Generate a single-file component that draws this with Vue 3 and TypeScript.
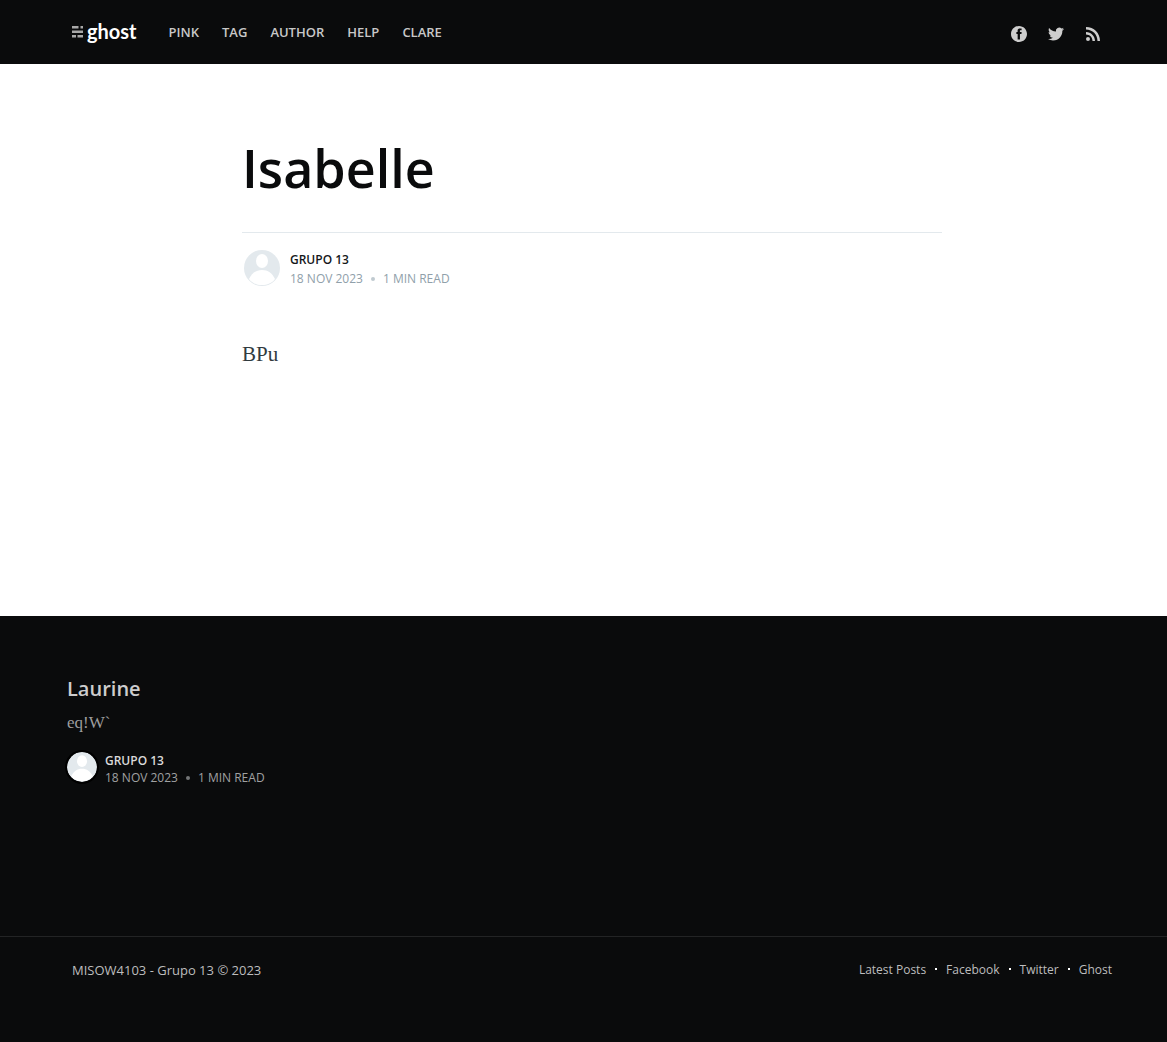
<script setup lang="ts">
interface Link {
  label: string
  href: string
}

const navLinks: Link[] = ['Pink', 'Tag', 'Author', 'Help', 'Clare'].map((label) => ({
  label,
  href: `#${label.toLowerCase()}`,
}))

const socialLinks = [
  {
    label: 'Facebook',
    href: '#facebook',
    viewBox: '0 0 32 32',
    path: 'M16 0c8.837 0 16 7.163 16 16s-7.163 16-16 16S0 24.837 0 16 7.163 0 16 0zm5.204 4.911h-3.546c-2.103 0-4.443.885-4.443 3.934.01 1.062 0 2.08 0 3.225h-2.433v3.872h2.509v11.147h4.61v-11.22h3.042l.275-3.81h-3.397s.007-1.695 0-2.187c0-1.205 1.253-1.136 1.329-1.136h2.054V4.911z',
  },
  {
    label: 'Twitter',
    href: '#twitter',
    viewBox: '0 0 24 24',
    path: 'M24 4.6c-.9.4-1.8.7-2.8.8 1-.6 1.8-1.6 2.2-2.7-1 .6-2 1-3.1 1.2A4.92 4.92 0 0 0 11.9 8.4C7.7 8.2 4.1 6.1 1.7 3.1 1.2 3.9 1 4.7 1 5.6c0 1.7.9 3.2 2.2 4.1-.8 0-1.6-.2-2.2-.6v.1c0 2.4 1.7 4.4 3.9 4.8-.7.2-1.5.2-2.2.1.6 2 2.4 3.4 4.6 3.4A9.9 9.9 0 0 1 0 19.5 13.9 13.9 0 0 0 7.5 21.7c9.1 0 14-7.5 14-14v-.6c1-.7 1.8-1.6 2.5-2.5z',
  },
  {
    label: 'RSS',
    href: '#rss',
    viewBox: '0 0 16 16',
    path: 'M5 13a2 2 0 1 1-4 0 2 2 0 0 1 4 0zM1 6v2.5c3.7 0 6.5 2.8 6.5 6.5H10C10 10 6 6 1 6zM1 1v2.5C7.5 3.5 12.5 8.5 12.5 15H15C15 7 9 1 1 1z',
  },
]

const footerLinks: Link[] = ['Latest Posts', 'Facebook', 'Twitter', 'Ghost'].map((label) => ({
  label,
  href: `#${label.toLowerCase().replace(' ', '-')}`,
}))
</script>

<template>
  <div class="site">
    <header class="bar">
      <nav class="inner bar-inner" aria-label="Main">
        <a class="logo" href="#home">
          <svg width="12" height="12" viewBox="0 0 12 12" aria-hidden="true">
            <path d="M0 0h6.5v2.4H0zM8.500 0H11v2.4H8.500zM0 4.500h11v2.400H0zM0 9h4v2.400H0zM5.500 9H11v2.400H5.500z" />
          </svg>
          <span>ghost</span>
        </a>
        <ul class="nav">
          <li v-for="link in navLinks" :key="link.label">
            <a :href="link.href">{{ link.label }}</a>
          </li>
        </ul>
        <div class="social">
          <a v-for="item in socialLinks" :key="item.label" :href="item.href" :aria-label="item.label">
            <svg width="16" height="16" :viewBox="item.viewBox" aria-hidden="true">
              <path :d="item.path" />
            </svg>
          </a>
        </div>
      </nav>
    </header>

    <main class="main">
      <article class="post">
        <h1>Isabelle</h1>
        <div class="byline">
          <svg class="avatar" viewBox="0 0 36 36" aria-hidden="true">
            <circle cx="18" cy="18" r="18" fill="#e3e9ed" />
            <ellipse cx="18" cy="11" rx="6" ry="7" fill="#fff" />
            <path d="M5 29c3-6 7-9 13-9s10 3 13 9c-3 4-8 6-13 6s-10-2-13-6z" fill="#fff" />
          </svg>
          <div class="meta">
            <a class="author" href="#grupo-13">Grupo 13</a>
            <div class="date"><time datetime="2023-11-18">18 Nov 2023</time><i class="dot"></i><span>1 min read</span></div>
          </div>
        </div>
        <p class="content">BPu</p>
      </article>
    </main>

    <aside class="more">
      <article class="card">
        <h2><a href="#laurine">Laurine</a></h2>
        <p>eq!W`</p>
        <div class="card-byline">
          <svg class="card-avatar" viewBox="0 0 36 36" aria-hidden="true">
            <circle cx="18" cy="18" r="18" fill="#e3e9ed" />
            <ellipse cx="18" cy="11" rx="6" ry="7" fill="#fff" />
            <path d="M5 29c3-6 7-9 13-9s10 3 13 9c-3 4-8 6-13 6s-10-2-13-6z" fill="#fff" />
          </svg>
          <div class="meta">
            <a class="author" href="#grupo-13">Grupo 13</a>
            <div class="date"><time datetime="2023-11-18">18 Nov 2023</time><i class="dot"></i><span>1 min read</span></div>
          </div>
        </div>
      </article>
    </aside>

    <footer class="footer">
      <div class="inner footer-inner">
        <section><a href="#home">MISOW4103 - Grupo 13</a> © 2023</section>
        <nav class="footer-nav" aria-label="Footer">
          <a v-for="link in footerLinks" :key="link.label" :href="link.href">{{ link.label }}</a>
        </nav>
      </div>
    </footer>
  </div>
</template>

<style>
body {
  background: #0a0b0c;
}
</style>

<style scoped>
.site {
  display: flex;
  flex-direction: column;
  min-height: 100vh;
  font-family: 'Open Sans', 'Noto Sans', sans-serif;
}

a {
  color: inherit;
  text-decoration: none;
}

.inner {
  box-sizing: border-box;
  width: 100%;
  max-width: 1040px;
  margin: 0 auto;
}

.bar {
  background: #0a0b0c;
  padding: 0 55px 0 72px;
}

.bar-inner {
  display: flex;
  align-items: center;
  height: 64px;
  padding-right: 11px;
}

.logo {
  display: flex;
  align-items: center;
  gap: 3px;
  color: #fff;
  font: 700 20px/24px Lato, sans-serif;
}

.logo span {
  padding-bottom: 3px;
}

.logo svg {
  fill: #a8a8a8;
}

.nav {
  display: flex;
  gap: 23px;
  margin: 0 0 0 32px;
  padding: 0;
  list-style: none;
  color: #c8c8c8;
  font-size: 13px;
  line-height: 20px;
  font-weight: 600;
  text-transform: uppercase;
}

.social {
  display: flex;
  gap: 21px;
  margin-left: auto;
  padding-top: 4px;
}

.social a,
.social svg {
  display: block;
}

.social svg {
  fill: #cecece;
}

.main {
  background: #fff;
  padding: 64px 55px 246px 72px;
}

.post {
  max-width: 700px;
  margin: 0 auto;
}

h1 {
  margin: 0;
  padding: 8px 0 32px;
  color: #0a0b0c;
  font-size: 52px;
  line-height: 64px;
  font-weight: 600;
}

.byline {
  display: flex;
  align-items: flex-start;
  gap: 10px;
  padding: 17px 2px 0;
  border-top: 1px solid #e3e9ed;
}

.avatar {
  width: 36px;
  height: 36px;
}

.meta {
  font-size: 12px;
  line-height: 19px;
  text-transform: uppercase;
}

.author {
  display: block;
  color: #15171a;
  font-weight: 600;
}

.date {
  display: flex;
  align-items: center;
  color: #90a0aa;
}

.dot {
  width: 4px;
  height: 4px;
  margin: 0 8px;
  border-radius: 50%;
  background: #c0cad0;
}

.content {
  margin: 0;
  padding: 50px 0 0;
  color: #303a3e;
  font: 21px/32px 'Liberation Serif', serif;
}

.more {
  flex: 1;
  background: #0a0b0c;
  padding: 57px 50px 146px 67px;
}

h2 {
  margin: 0;
  color: #cdcdce;
  font-size: 20px;
  line-height: 32px;
  font-weight: 600;
}

.card p {
  margin: 0;
  padding: 6px 0 16px;
  color: #9d9d9e;
  font: 17px/24px 'Liberation Serif', serif;
}

.card-byline {
  display: flex;
  align-items: flex-start;
  gap: 8px;
  padding-top: 1px;
}

.card-avatar {
  width: 30px;
  height: 30px;
  border-radius: 50%;
  box-shadow: 0 0 0 2px #000;
}

.card .meta {
  line-height: 17px;
}

.card .author {
  color: #dadada;
}

.card .date {
  color: #a0a1a2;
}

.card .dot {
  background: #747678;
}

.footer {
  border-top: 1px solid #232425;
  background: #0a0b0c;
  padding: 23px 55px 62px 72px;
  color: #bdbdbe;
  font-size: 13px;
  line-height: 20px;
}

.footer-inner {
  display: flex;
  justify-content: space-between;
}

.footer-nav {
  display: flex;
  font-size: 12px;
}

.footer-nav a + a::before {
  content: '';
  display: inline-block;
  width: 2px;
  height: 2px;
  margin: 0 9px;
  background: #fff;
  vertical-align: 4px;
}
</style>
